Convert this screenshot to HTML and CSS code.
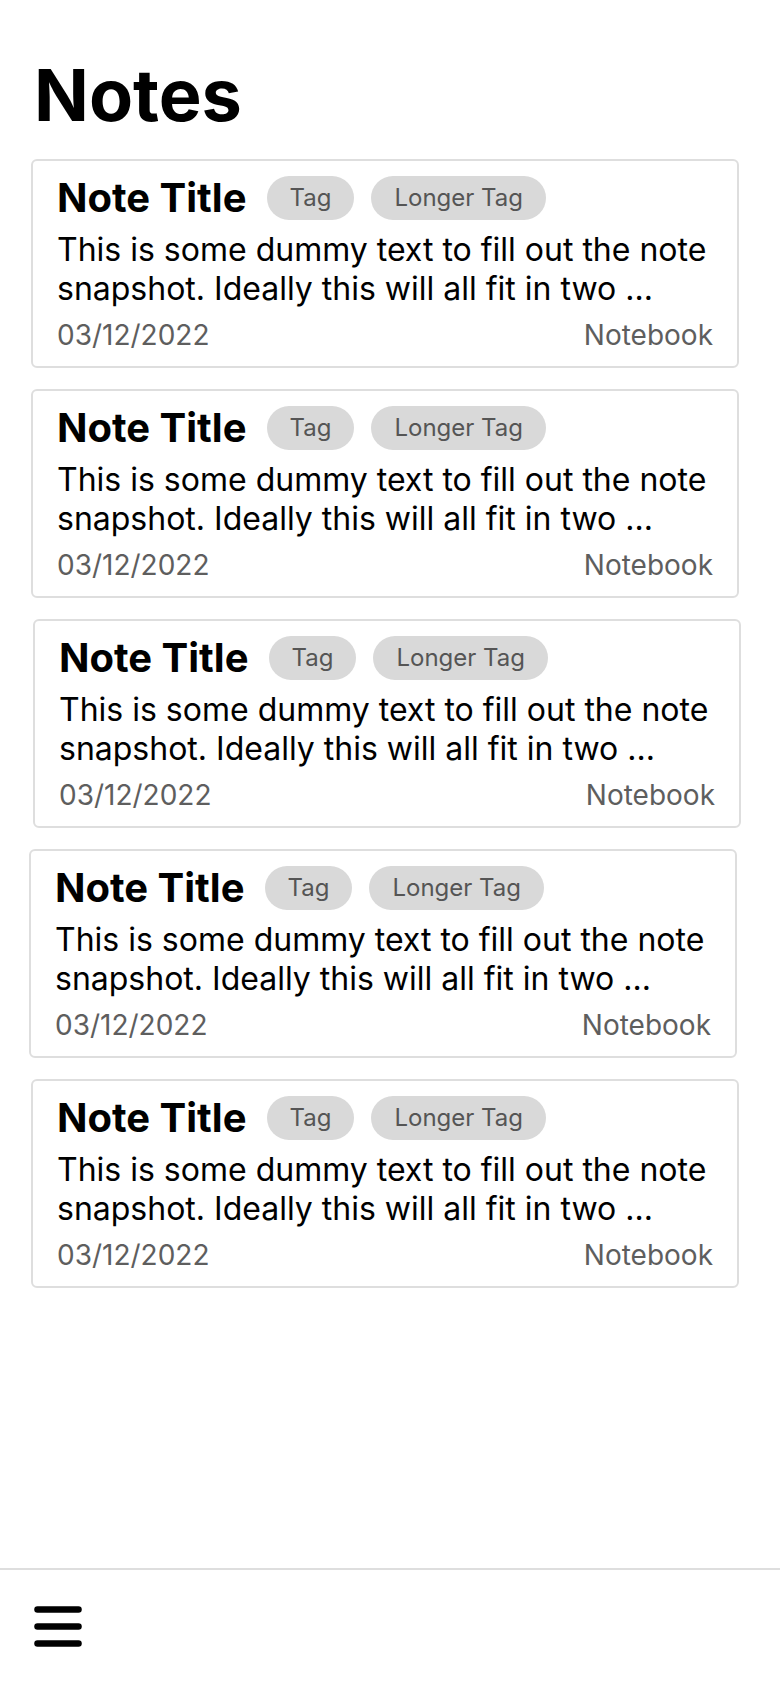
FILE: index.html
```html
<!DOCTYPE html>
<html lang="en">
<head>
<meta charset="utf-8">
<title>Notes</title>
<link rel="stylesheet" href="styles.css">
</head>
<body>
<div class="app">
  <main class="content">
    <h1 class="page-title">Notes</h1>
    <ul class="note-list">
      <li class="note-card">
        <div class="note-head">
          <h2 class="note-title">Note Title</h2>
          <span class="tag">Tag</span>
          <span class="tag">Longer Tag</span>
        </div>
        <p class="note-body">This is some dummy text to fill out the note snapshot. Ideally this will all fit in two ...</p>
        <div class="note-meta"><span>03/12/2022</span><span>Notebook</span></div>
      </li>
      <li class="note-card">
        <div class="note-head">
          <h2 class="note-title">Note Title</h2>
          <span class="tag">Tag</span>
          <span class="tag">Longer Tag</span>
        </div>
        <p class="note-body">This is some dummy text to fill out the note snapshot. Ideally this will all fit in two ...</p>
        <div class="note-meta"><span>03/12/2022</span><span>Notebook</span></div>
      </li>
      <li class="note-card note-card--nudge-right">
        <div class="note-head">
          <h2 class="note-title">Note Title</h2>
          <span class="tag">Tag</span>
          <span class="tag">Longer Tag</span>
        </div>
        <p class="note-body">This is some dummy text to fill out the note snapshot. Ideally this will all fit in two ...</p>
        <div class="note-meta"><span>03/12/2022</span><span>Notebook</span></div>
      </li>
      <li class="note-card note-card--nudge-left">
        <div class="note-head">
          <h2 class="note-title">Note Title</h2>
          <span class="tag">Tag</span>
          <span class="tag">Longer Tag</span>
        </div>
        <p class="note-body">This is some dummy text to fill out the note snapshot. Ideally this will all fit in two ...</p>
        <div class="note-meta"><span>03/12/2022</span><span>Notebook</span></div>
      </li>
      <li class="note-card">
        <div class="note-head">
          <h2 class="note-title">Note Title</h2>
          <span class="tag">Tag</span>
          <span class="tag">Longer Tag</span>
        </div>
        <p class="note-body">This is some dummy text to fill out the note snapshot. Ideally this will all fit in two ...</p>
        <div class="note-meta"><span>03/12/2022</span><span>Notebook</span></div>
      </li>
    </ul>
  </main>
  <footer class="bottom-bar">
    <button class="menu-button" aria-label="Menu">
      <svg width="48" height="41" viewBox="0 0 48 41">
        <g stroke="#000" stroke-width="6.5" stroke-linecap="round">
          <line x1="3.5" y1="3.5" x2="44.5" y2="3.5"/>
          <line x1="3.5" y1="20.5" x2="44.5" y2="20.5"/>
          <line x1="3.5" y1="37.5" x2="44.5" y2="37.5"/>
        </g>
      </svg>
    </button>
  </footer>
</div>
</body>
</html>
```

FILE: styles.css
```css
* { box-sizing: border-box; }

html, body {
  margin: 0;
  padding: 0;
  background: #fff;
}

body {
  font-family: Inter, "Noto Sans", "Liberation Sans", sans-serif;
  color: #000;
}

.app {
  min-height: 100vh;
  display: flex;
  flex-direction: column;
}

.content {
  flex: 1;
  padding: 52px 0 0 31px;
  display: flex;
  flex-direction: column;
  gap: 21px;
}

.page-title {
  margin: 0;
  font-size: 72px;
  font-weight: 700;
  line-height: 1.2;
  padding-left: 3px;
}

.note-list {
  list-style: none;
  margin: 0;
  padding: 0;
  display: flex;
  flex-direction: column;
  gap: 21px;
}

.note-card {
  width: 708px;
  height: 209px;
  border: 2px solid #dedede;
  border-radius: 6px;
  padding: 15px 24px 12px 24px;
  display: flex;
  flex-direction: column;
}

.note-card--nudge-right { margin-left: 2px; }
.note-card--nudge-left { margin-left: -2px; }

.note-head {
  display: flex;
  align-items: center;
  gap: 17px;
  height: 44px;
}

.note-title {
  margin: 0 3px 0 0;
  font-size: 40px;
  font-weight: 700;
  line-height: 44px;
}

.tag {
  height: 44px;
  line-height: 44px;
  padding: 0 23px;
  border-radius: 22px;
  background: #d9d9d9;
  color: #555;
  font-size: 24px;
}

.note-body {
  margin: 11px 0 10px;
  font-size: 32px;
  line-height: 38.5px;
  color: #000;
}

.note-meta {
  display: flex;
  justify-content: space-between;
  font-size: 28px;
  line-height: 34px;
  color: #5e5e5e;
}

.bottom-bar {
  border-top: 2px solid #dedede;
  height: 120px;
  padding: 36px 0 0 34px;
}

.menu-button {
  border: 0;
  background: none;
  padding: 0;
  margin: 0;
  display: block;
  cursor: pointer;
}

.menu-button svg { display: block; }
```
